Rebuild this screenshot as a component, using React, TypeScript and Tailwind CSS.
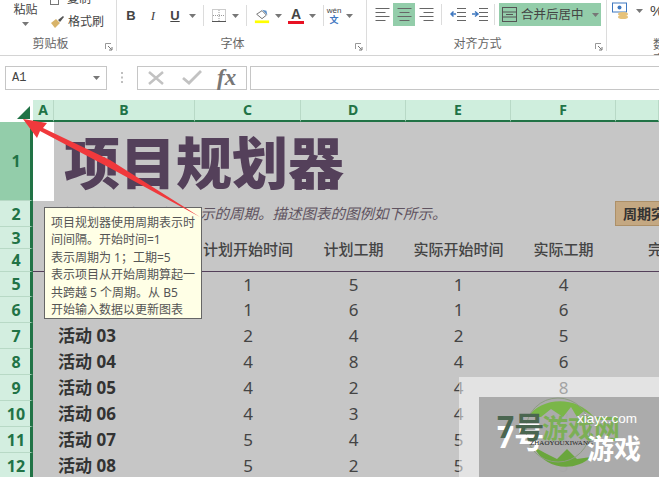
import React from 'react';

const sans = "font-['Noto_Sans','Noto_Sans_CJK_SC',sans-serif]";

const Caret = ({ className = '' }: { className?: string }) => (
  <svg width="7" height="4" viewBox="0 0 7 4" className={className}>
    <path d="M0 0h7L3.5 4z" fill="#777" />
  </svg>
);

const Launcher = () => (
  <svg width="8" height="8" viewBox="0 0 8 8" className="absolute right-[3px] top-[43px]">
    <path d="M0.5 6V0.5H6" fill="none" stroke="#999" />
    <path d="M3 3l3.5 3.5M7 4v3H4" fill="none" stroke="#777" />
  </svg>
);

const Lines = ({ mode }: { mode: 'left' | 'center' | 'right' }) => {
  const rows = [0, 4, 8, 12];
  const widths = [14, 10, 14, 10];
  return (
    <svg width="15" height="13" viewBox="0 0 15 13">
      {rows.map((y, i) => {
        const w = widths[i];
        const x = mode === 'left' ? 0.5 : mode === 'right' ? 14.5 - w : 7.5 - w / 2;
        return <rect key={y} x={x} y={y} width={w} height="1" fill="#666" />;
      })}
    </svg>
  );
};

const Indent = ({ flip }: { flip?: boolean }) => (
  <svg width="16" height="13" viewBox="0 0 16 13">
    {[0, 4, 8, 12].map((y) => (
      <rect key={y} x="7" y={y} width="9" height="1" fill="#666" />
    ))}
    <path d={flip ? 'M0 6h5M3 3.5L6 6 3 8.5' : 'M6 6H1M3.5 3.5L1 6l2.5 2.5'} fill="none" stroke="#3f78c0" strokeWidth="1.5" />
  </svg>
);

const Group = ({ width, label, launcher, children, labelClass = '' }: { width: string; label?: string; launcher?: boolean; children: React.ReactNode; labelClass?: string }) => (
  <div className={`relative flex h-[51px] shrink-0 flex-col border-r border-[#dcdcdc] ${width}`}>
    <div className="flex h-[38px] items-start">{children}</div>
    {label && <div className={`text-center text-[12px] leading-[15px] text-[#666] ${labelClass}`}>{label}</div>}
    {launcher && <Launcher />}
  </div>
);

const Ribbon = () => (
  <div className="flex h-[56px] shrink-0 overflow-hidden border-b border-[#d4d4d4] bg-white text-[#444]">
    <Group width="w-[117px]" label="剪贴板" launcher labelClass="pr-[15px]">
      <div className="flex w-[50px] flex-col items-center pl-[1px] pt-[2px]">
        <span className="text-[12px] leading-[16px]">粘贴</span>
        <Caret className="mt-[4px]" />
      </div>
      <div className="flex flex-col">
        <div className="-mt-[9px] flex h-[16px] items-center gap-[5px] text-[12px]">
          <svg width="12" height="11" viewBox="0 0 12 11"><rect x="0.5" y="0.5" width="8" height="10" fill="none" stroke="#777" /></svg>
          <span>复制</span>
        </div>
        <div className="mt-[6px] flex h-[18px] items-center gap-[3px] text-[12px]">
          <svg width="15" height="14" viewBox="0 0 15 14">
            <path d="M1 8l5-4 4 4-5 5z" fill="#d8b46a" />
            <path d="M8 5l5-4 1 1-4 5z" fill="#555" />
          </svg>
          <span>格式刷</span>
        </div>
      </div>
    </Group>

    <Group width="w-[250px]" label="字体" launcher labelClass="pr-[18px]">
      <div className="flex items-center pl-[3px] pt-[5px]">
        <span className="w-[22px] text-center text-[13px] font-bold leading-[18px] font-['Liberation_Sans',sans-serif]">B</span>
        <span className="w-[22px] text-center text-[13px] italic leading-[18px] font-['Liberation_Serif',serif]">I</span>
        <span className="w-[22px] text-center text-[13px] font-bold underline leading-[18px] font-['Liberation_Sans',sans-serif]">U</span>
        <Caret className="ml-[3px]" />
        <div className="ml-[7px] h-[21px] w-px bg-[#dcdcdc]" />
        <svg width="14" height="13" viewBox="0 0 14 13" className="ml-[8px]">
          <rect x="0.5" y="0.5" width="13" height="12" fill="none" stroke="#999" strokeDasharray="1 1" />
          <path d="M7 1v11M1 6.5h12" stroke="#999" strokeDasharray="1 1" />
          <path d="M0 12.5h14" stroke="#555" />
        </svg>
        <Caret className="ml-[6px]" />
        <div className="ml-[7px] h-[21px] w-px bg-[#dcdcdc]" />
        <svg width="16" height="16" viewBox="0 0 18 16" className="ml-[7px]">
          <path d="M3 6l6-4 5 5-5 4z" fill="#fff" stroke="#666" />
          <path d="M9 1l5 1 1 5z" fill="#5b8fc9" />
          <rect x="1" y="13" width="16" height="3" fill="#ffff00" />
        </svg>
        <Caret className="ml-[5px]" />
        <div className="ml-[6px] flex w-[16px] flex-col items-center">
          <span className="text-[14px] font-bold leading-[14px] font-['Liberation_Sans',sans-serif]">A</span>
          <div className="h-[3px] w-[16px] bg-[#e81123]" />
        </div>
        <Caret className="ml-[5px]" />
        <div className="ml-[7px] h-[21px] w-px bg-[#dcdcdc]" />
        <div className="ml-[2px] flex w-[16px] flex-col items-center">
          <span className="text-[8px] leading-[8px] font-['Liberation_Sans',sans-serif]">wén</span>
          <span className="text-[9px] font-bold leading-[10px] text-[#3f78c0]">文</span>
        </div>
        <Caret className="ml-[4px]" />
      </div>
    </Group>

    <Group width="w-[240px]" label="对齐方式" launcher labelClass="pr-[18px]">
      <div className="flex items-center pl-[4px] pt-[3px]">
        <div className="flex h-[23px] w-[22px] items-center justify-center"><Lines mode="left" /></div>
        <div className="flex h-[23px] w-[22px] items-center justify-center bg-[#93cdaa]"><Lines mode="center" /></div>
        <div className="flex h-[23px] w-[22px] items-center justify-center"><Lines mode="right" /></div>
        <div className="ml-[4px] h-[21px] w-px bg-[#dcdcdc]" />
        <div className="ml-[8px] flex gap-[6px]"><Indent /><Indent flip /></div>
        <div className="ml-[6px] h-[21px] w-px bg-[#dcdcdc]" />
        <div className="ml-[4px] flex h-[23px] w-[102px] items-center bg-[#93cdaa] pl-[3px]">
          <svg width="16" height="16" viewBox="0 0 16 16">
            <rect x="0.5" y="0.5" width="14" height="14" fill="none" stroke="#555" />
            <path d="M0 5h15M0 10h15M4 7.5h7" stroke="#555" />
          </svg>
          <span className="ml-[3px] text-[12.5px] leading-[16px]">合并后居中</span>
          <Caret className="ml-[8px]" />
        </div>
      </div>
    </Group>

    <div className="relative flex h-[51px] flex-1 flex-col">
      <div className="flex h-[38px] items-center pb-[14px] pl-[5px]">
        <svg width="18" height="18" viewBox="0 0 18 18">
          <rect x="0.5" y="1" width="14" height="9" fill="#fff" stroke="#3f78c0" />
          <circle cx="7.5" cy="5.5" r="2" fill="#3f78c0" />
          <ellipse cx="11" cy="12" rx="5" ry="2" fill="#e6c27a" />
          <ellipse cx="11" cy="15" rx="5" ry="2" fill="#e6c27a" />
        </svg>
        <Caret className="ml-[6px]" />
        <span className="ml-[7px] text-[15px] font-['Liberation_Sans',sans-serif]">%</span>
      </div>
      <div className="pl-[46px] text-[12px] leading-[15px] text-[#666]">数字</div>
    </div>
  </div>
);

const FormulaBar = () => (
  <div className="flex h-[44px] shrink-0 items-center bg-white pb-[1px]">
    <div className="ml-[5px] flex h-[24px] w-[102px] items-center justify-between border border-[#c6c6c6] bg-white pl-[6px] pr-[6px] text-[12px] text-[#444] font-['Liberation_Mono',monospace]">
      <span>A1</span>
      <Caret />
    </div>
    <div className="flex w-[30px] justify-center">
      <svg width="3" height="11" viewBox="0 0 3 11"><path d="M1 0v2M1 4.5v2M1 9v2" stroke="#aaa" strokeWidth="1.5" /></svg>
    </div>
    <div className="flex h-[24px] w-[110px] items-center border border-[#c6c6c6] bg-white">
      <svg width="18" height="14" viewBox="0 0 18 14" className="ml-[9px]"><path d="M2 1l14 12M16 1L2 13" stroke="#c2c2c2" strokeWidth="2.5" /></svg>
      <svg width="20" height="15" viewBox="0 0 20 15" className="ml-[17px]"><path d="M1 8l6 5L19 1" fill="none" stroke="#c2c2c2" strokeWidth="2.8" /></svg>
      <span className="ml-[15px] text-[23px] font-bold italic leading-[22px] text-[#777] font-['Liberation_Serif',serif]">fx</span>
    </div>
    <div className="ml-[3px] h-[24px] flex-1 border-y border-l border-[#c6c6c6] bg-white" />
  </div>
);

const columnClass = 'grid grid-cols-[33px_21px_141px_106px_105px_105px_105px_1fr]';

const ColumnHeader = () => (
  <div className={`${columnClass} h-[22px] shrink-0 bg-[#cfeedd] text-[14px] font-bold leading-[20px] text-[#217346]`}>
    <div className="relative bg-white">
      <div className="absolute bottom-[3px] right-[3px] h-0 w-0 border-b-[13px] border-l-[13px] border-b-[#217346] border-l-transparent" />
    </div>
    {['A', 'B', 'C', 'D', 'E', 'F', ''].map((c, i) => (
      <div key={i} className="border-b-2 border-r border-b-[#217346] border-r-[#b8d9c6] text-center">{c}</div>
    ))}
  </div>
);

const rowHeights = [79, 26, 22, 23, 25, 26, 26, 26, 26, 26, 26, 26];

const activities = [
  ['活动 01', 1, 5, 1, 4],
  ['活动 02', 1, 6, 1, 6],
  ['活动 03', 2, 4, 2, 5],
  ['活动 04', 4, 8, 4, 6],
  ['活动 05', 4, 2, 4, 8],
  ['活动 06', 4, 3, 4, 6],
  ['活动 07', 5, 4, 5, 3],
  ['活动 08', 5, 2, 5, 5],
];

const headers = ['计划开始时间', '计划工期', '实际开始时间', '实际工期'];

const Sheet = () => (
  <div className={`${columnClass} grid-rows-[79px_26px_22px_23px_25px_repeat(7,26px)] bg-[#c6c6c6]`}>
    {rowHeights.map((_, i) => (
      <div
        key={i}
        style={{ gridRow: i + 1 }}
        className={`col-start-1 flex items-center justify-center border-b border-r-[3px] border-b-[#b8d9c6] border-r-[#217346] pl-[2px] text-[16px] font-bold text-[#217346] ${i === 0 ? 'bg-[#93cdaa]' : 'bg-[#d3eee0]'}`}
      >
        {i + 1}
      </div>
    ))}

    <div className="col-start-2 row-start-1 bg-white" />
    <div className="col-span-6 col-start-3 row-start-1 flex items-center overflow-hidden whitespace-nowrap pl-[10px] text-[56px] font-black leading-none text-[#54405a]">
      项目规划器
    </div>

    <div className="col-span-6 col-start-2 row-start-2 flex items-center whitespace-nowrap pl-[22px] text-[14.5px] italic text-[#5f5360]">
      请在右侧选择要突出显示的周期。描述图表的图例如下所示。
    </div>
    <div className="col-start-8 row-start-2 -ml-[1px] mb-[1px] flex items-center overflow-hidden whitespace-nowrap border-b border-l border-t border-[#ad9068] bg-[#c4a882] pl-[7px] text-[14px] font-bold text-[#333]">
      周期突出显示
    </div>

    <div className="col-span-2 col-start-2 row-span-2 row-start-3 border-b border-[#54405a]" />
    {headers.map((h, i) => (
      <div
        key={h}
        style={{ gridColumnStart: i + 4 }}
        className="row-span-2 row-start-3 flex items-center justify-center whitespace-nowrap border-b border-[#54405a] text-[15px] font-medium text-[#444]"
      >
        {h}
      </div>
    ))}
    <div className="col-start-8 row-span-2 row-start-3 flex items-center overflow-hidden whitespace-nowrap border-b border-[#54405a] pl-[32px] text-[15px] font-medium text-[#444]">
      完成百分比
    </div>

    {activities.map((row, r) => (
      <React.Fragment key={r}>
        <div style={{ gridRow: r + 5 }} className="col-start-3 flex items-center pl-[4px] text-[17px] font-bold text-[#333]">
          {row[0]}
        </div>
        {row.slice(1).map((v, c) => (
          <div key={c} style={{ gridRow: r + 5, gridColumnStart: c + 4 }} className="flex items-center justify-center text-[17px] text-[#444]">
            {v}
          </div>
        ))}
      </React.Fragment>
    ))}
  </div>
);

const Tooltip = () => (
  <div className="absolute left-[44px] top-[207px] h-[112px] w-[158px] border border-[#666] bg-[#ffffe6] pl-[6px] pt-[6px] text-[12px] leading-[17.4px] text-[#555]">
    项目规划器使用周期表示时<br />
    间间隔。开始时间=1<br />
    表示周期为 1；工期=5<br />
    表示项目从开始周期算起一<br />
    共跨越 5 个周期。从 B5<br />
    开始输入数据以更新图表
  </div>
);

const Arrow = () => (
  <svg width="659" height="477" viewBox="0 0 659 477" className="pointer-events-none absolute left-0 top-0">
    <path d="M23 119L47 123L43 128L110 160L200 217L110 168L40 131L37 138z" fill="#f0393c" />
  </svg>
);

const Watermark = () => (
  <div className="absolute left-[459px] top-[377px] h-[100px] w-[200px] bg-white/50 pl-[20px] pt-[20px]">
    <div className="relative h-full w-full overflow-hidden bg-[#a8a8a8]/95">
      <svg width="180" height="80" viewBox="0 0 180 80" className="absolute left-0 top-0">
        <path d="M49 20C60 2 95 -4 115 20L105 14L98 20L92 10L84 20L72 12L62 20z" fill="#7ab648" />
        <path d="M55 50C65 72 95 76 112 60L98 62L88 52L78 62L66 56z" fill="#6aa63c" />
        <circle cx="79" cy="33" r="32" fill="none" stroke="#8c9c80" />
      </svg>
      <span className="absolute left-[18px] top-[22px] text-[30px] font-bold leading-[36px] text-white">7号</span>
      <span className="absolute left-[18px] top-[12px] text-[30px] font-bold leading-[36px] text-[#4a6650]">7号</span>
      <span className="absolute left-[63px] top-[16px] text-[26px] font-bold leading-[30px] text-[#6fb13f]/80">游戏网</span>
      <span className="absolute left-[98px] top-[14px] text-[13.5px] leading-[16px] text-white font-['Liberation_Sans',sans-serif]">xiayx.com</span>
      <span className="absolute left-[51px] top-[42px] text-[7px] leading-[8px] text-[#222] font-['Liberation_Serif',serif]">ZHAOYOUXIWANG</span>
      <span className="absolute left-[108px] top-[36px] text-[27px] font-bold leading-[32px] text-white">游戏</span>
    </div>
  </div>
);

export default function App() {
  return (
    <div className={`relative flex h-[477px] w-[659px] flex-col overflow-hidden bg-white ${sans}`}>
      <Ribbon />
      <FormulaBar />
      <ColumnHeader />
      <Sheet />
      <Watermark />
      <Tooltip />
      <Arrow />
    </div>
  );
}
